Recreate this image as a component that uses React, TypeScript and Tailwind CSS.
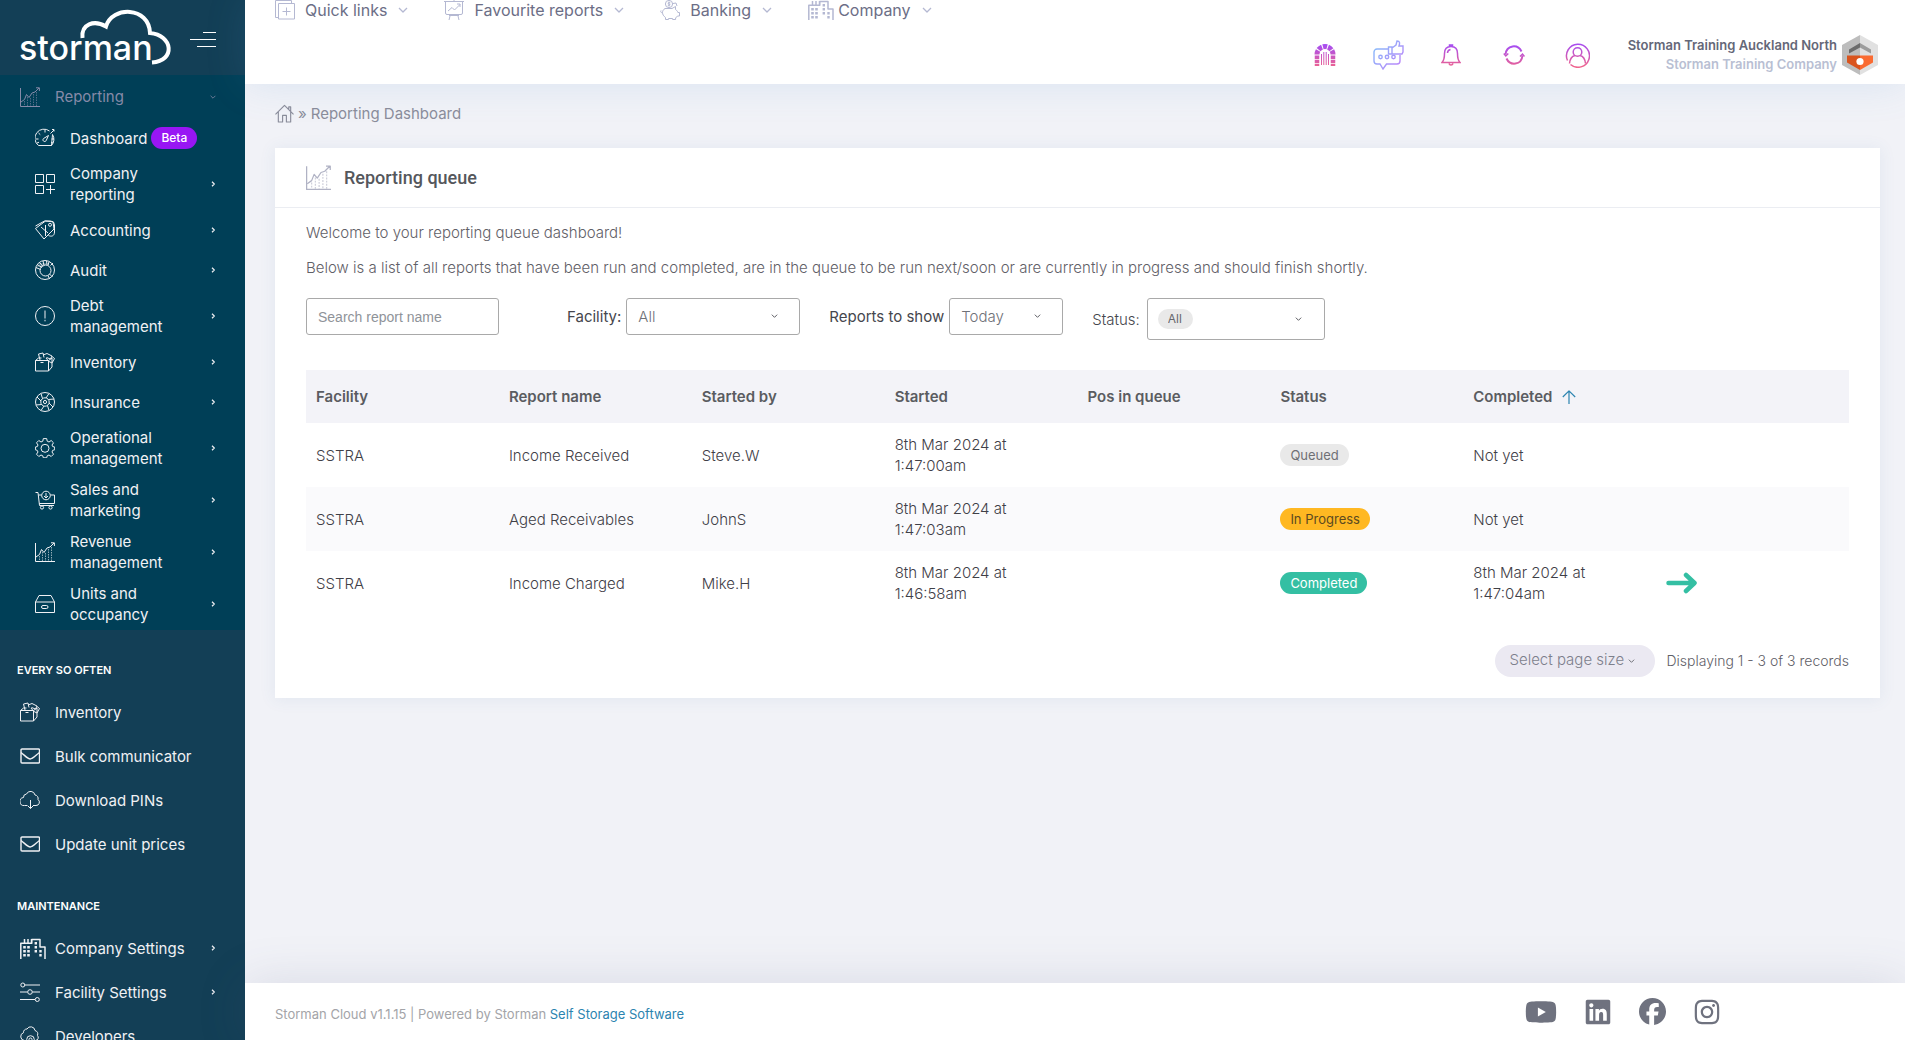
import React from "react";
import { FaFacebook, FaInstagram, FaLinkedin, FaYoutube } from "react-icons/fa6";

// icons

interface IconProps {
  className?: string;
}

interface LineIconProps extends IconProps {
  children: React.ReactNode;
  box?: string;
}

const LineIcon = ({ className, children, box = "0 0 20 20" }: LineIconProps) => (
  <svg
    viewBox={box}
    className={className}
    fill="none"
    stroke="currentColor"
    strokeWidth="1"
    strokeLinejoin="round"
    aria-hidden="true"
  >
    {children}
  </svg>
);

const ChartIcon = ({ className }: IconProps) => (
  <LineIcon className={className}>
    <path d="M.5 1v18.5H20" />
    <path d="M1 15l3.500-2.500 2-5 2.500 3 3-4.500 3-1 4-4M16 .8h3.400V4" />
    <path d="M4.500 14v5M7.500 10v9M10.500 11v8M13.500 7v12M16.500 5v14" strokeDasharray="1.500 1" strokeOpacity="0.6" />
  </LineIcon>
);

const GaugeIcon = ({ className }: IconProps) => (
  <LineIcon className={className}>
    <path d="M3.500 17.500A9 9 0 0 1 14.500 3M17.500 6.500a9 9 0 0 1-1 11zM3.500 17.500h13" />
    <path d="M1 11h2.500M3.500 5l1.800 1.700M10 2v2.500M19 11h-2.500M2 15l2-.8M18 15l-2-.8M15.500 5.500l3.500-3.500M17 1.500l2 0 0 2" />
    <path d="M13.500 7.500l-2.300 5a1.700 1.700 0 1 1-2.300-2.200z" />
  </LineIcon>
);

const GridIcon = ({ className }: IconProps) => (
  <LineIcon className={className}>
    <path d="M.5.5h8v8h-8zM11.500.5h8v8h-8zM.5 11.500h8v8h-8zM15.500 11v9M11 15.500h9" />
  </LineIcon>
);

const TagIcon = ({ className }: IconProps) => (
  <LineIcon className={className}>
    <path d="M.5 8.500l10-7.500 7.500.8 1 7.200-10 10z" />
    <path d="M.5 6l9-5h6a4 4 0 0 1 4 4v7c0 4-3 5-6 3.500M6 7l7 6M10.500 5v11" />
    <circle cx="15" cy="4.800" r="1.500" />
  </LineIcon>
);

const DonutIcon = ({ className }: IconProps) => (
  <LineIcon className={className}>
    <circle cx="10" cy="10" r="9.500" />
    <circle cx="10.500" cy="10.500" r="5.500" />
    <path d="M1 7.500l4.500 2M8 1l1 4.500M14.500 14l3 3M13 15.500l1.500 3.500M15.500 5.500l2.500-2.500M3 5l4 2.500M5 3l3 3.500M11.500 .8l.5 4M14 1.500l-1 4" />
    <path d="M2.500 6h6M4.500 4h9" strokeDasharray="1 1" />
  </LineIcon>
);

const AlertIcon = ({ className }: IconProps) => (
  <LineIcon className={className}>
    <circle cx="10" cy="10" r="9.500" />
    <path d="M10 4.500v8M10 13.800v1.500" />
  </LineIcon>
);

const BoxIcon = ({ className }: IconProps) => (
  <LineIcon className={className}>
    <path d="M.5 8.500h13v10.500H.5zM.5 8.500l3-2.500h3M13.500 8.500l3.500-2.500v9l-3.500 4" />
    <path d="M5 8l-1.500-6 4.500-1 1 4.500M8 3l4-1.500 5 2.500-1.500 3-4-1.500M11 6l2 2.500M17 4.500l2.500 2-2.500 4.500-3-1.500M5.500 10.500h3" />
  </LineIcon>
);

const WheelIcon = ({ className }: IconProps) => (
  <LineIcon className={className}>
    <circle cx="10" cy="10" r="9.500" />
    <circle cx="10" cy="10" r="4.200" />
    <circle cx="10" cy="10" r="1.600" />
    <path d="M6 9L2 5M7.500 6.500L6 1.500M11 6l3-4.500M13.500 7.500l5.500-.5M14 11l4 4M12.500 13.500L14 18.500M9 14l-3 4.500M6.500 12.500L1 13" />
  </LineIcon>
);

const GearIcon = ({ className }: IconProps) => (
  <LineIcon className={className}>
    <path d="M8.300.6h3.400l.5 2.600 1.800.8 2.200-1.500 2.300 2.300L17 7l.7 1.600 2 .4v2.800l-2 .5L17 14l1.500 2.200-2.300 2.300L14 17l-1.800.8-.5 2H8.300l-.5-2L6 17l-2.200 1.500-2.300-2.300L3 14l-.8-1.700-1.800-.5V9l1.900-.4L3 7 1.500 4.800l2.300-2.300L6 4l1.800-.8z" />
    <circle cx="10" cy="10.300" r="4" />
  </LineIcon>
);

const CartIcon = ({ className }: IconProps) => (
  <LineIcon className={className}>
    <path d="M.5 2.500h2.500l1.500 13h14.500M3.500 5h3M15.500 5h4v8.500H4.300" />
    <circle cx="11" cy="5.500" r="4.300" />
    <path d="M11 3v5M9 6l2 2 2-2" />
    <circle cx="7" cy="17.500" r="1.600" />
    <circle cx="15.500" cy="17.500" r="1.600" />
  </LineIcon>
);

const DrawerIcon = ({ className }: IconProps) => (
  <LineIcon className={className}>
    <path d="M.5 8h19v10.500H.5zM.5 8L4 1.500h12L19.500 8" />
    <rect x="6.500" y="11.500" width="6.500" height="3" rx="1.500" />
  </LineIcon>
);

const MailIcon = ({ className }: IconProps) => (
  <LineIcon className={className}>
    <rect x="1" y="3" width="18.500" height="14" rx="1" strokeWidth="1.400" />
    <path d="M1 6.500c3.500 2.500 6.500 6.500 9.200 6.500S16 9 19.500 6.500" strokeWidth="1.400" />
  </LineIcon>
);

const CloudIcon = ({ className }: IconProps) => (
  <LineIcon className={className}>
    <path d="M7.500 15.500H4.500a4 4 0 0 1-1-8A3.300 3.300 0 0 1 6.500 4a4.500 4.500 0 0 1 8.500 1 3.500 3.500 0 0 1 3 4.500 3.300 3.300 0 0 1-2 6H13" />
    <path d="M10.500 10v8.500M8 16l2.500 2.500L13 16" />
  </LineIcon>
);

const CloudGearIcon = ({ className }: IconProps) => (
  <LineIcon className={className}>
    <path d="M5.500 14.500H4.500a4 4 0 0 1-1-7.800A3.300 3.300 0 0 1 7 3a4.300 4.300 0 0 1 8 1.500 4 4 0 0 1 2.500 5A3 3 0 0 1 15.500 14.500" />
    <circle cx="10.500" cy="13.500" r="3.800" />
    <circle cx="10.500" cy="13.500" r="1.500" />
  </LineIcon>
);

const CityIcon = ({ className }: IconProps) => (
  <LineIcon className={className} box="0 0 26 21">
    <path d="M.8 21V5.200h11V1.500h8.200V9h5v12M4.500 1v4M8 1v4M11.500 1v4" strokeWidth="1.500" />
    <path d="M4.500 8v11M8.500 8v11" strokeWidth="2.600" strokeDasharray="2.600 1.400" />
    <path d="M15.800 4v11M20.500 12v7" strokeWidth="2.400" strokeDasharray="2.600 1.400" />
  </LineIcon>
);

const SlidersIcon = ({ className }: IconProps) => (
  <LineIcon className={className}>
    <path d="M5 3h15M0 10h7.500M12.500 10H20M0 17.500h15" strokeWidth="1.200" />
    <circle cx="2.800" cy="3" r="2" />
    <circle cx="10" cy="10" r="2.300" />
    <circle cx="17.300" cy="17.500" r="2" />
  </LineIcon>
);

const AddPageIcon = ({ className }: IconProps) => (
  <LineIcon className={className}>
    <path d="M3.500 3.500h16v15.500h-16zM3.500 17.500H.5V.5h16v3M11.500 7.500v8M7.500 11.500h8" />
  </LineIcon>
);

const BoardIcon = ({ className }: IconProps) => (
  <LineIcon className={className}>
    <path d="M0 1.500h20M1.500 1.500v11.500a1.500 1.500 0 0 0 1.500 1.500h14a1.500 1.500 0 0 0 1.500-1.500V1.500M10 0v1.500M5 15.500h10M6 16l-1 4M14 16l1 4" />
    <path d="M4 11l4-3.500 2.500 2.500 5.500-5.500M13 4h3v3" />
  </LineIcon>
);

const PiggyIcon = ({ className }: IconProps) => (
  <LineIcon className={className}>
    <circle cx="9" cy="4" r="3.600" />
    <path d="M9 1.500v5M10.300 2.800c-2-1-3.200.8-1.300 1.200s1 2-1.200 1.200" />
    <path d="M5 8.500h7l3.500-2v3c1.500 1 2 1.800 2.400 3h1.600v3.500h-2l-1.900 2v1.500h-3V18.500H8.500V19.500h-3V17.500c-2-1.500-3-3-3-5 0-1.800 1-3 2.500-4zM2.500 12.500c-1.500.5-2.200-.7-1.500-2M13 3.500l3-.5 1 3" />
  </LineIcon>
);

const HomeIcon = ({ className }: IconProps) => (
  <LineIcon className={className}>
    <path d="M.5 11L10 1.500 19.500 11M3.500 8.500V19h4.500v-7h4v7h4.500V8.500M14.500 5.500V3h2v4.500" strokeWidth="1.200" />
  </LineIcon>
);

const Chevron = ({ className }: IconProps) => (
  <LineIcon className={className} box="0 0 10 6">
    <path d="M1 1l4 4 4-4" strokeWidth="1.300" />
  </LineIcon>
);

const SmallRight = () => (
  <LineIcon className="h-2 w-1.5 shrink-0" box="0 0 6 8">
    <path d="M2 1.800L4.300 4 2 6.200" strokeWidth="1.200" />
  </LineIcon>
);

const Logo = () => (
  <svg viewBox="0 0 152 56" className="h-14 w-38 overflow-visible" role="img" aria-label="storman">
    <path
      d="M62.500 28C61 14 74 9.500 86 16.500C92 -4 129 -4 130 23C153 25 156 51 132 52.500"
      fill="none"
      stroke="#fff"
      strokeWidth="4"
    />
    <text x="-1" y="50" fill="#fff" fontFamily="Inter, sans-serif" fontSize="34" fontWeight="500">
      storman
    </text>
  </svg>
);

const GateIcon = () => (
  <svg viewBox="0 0 22 22" className="h-[22px] w-[22px]" fill="none" stroke="url(#warm)" aria-hidden="true">
    <path d="M3 10.500a8 8 0 0 1 16 0" strokeWidth="5" strokeDasharray="4.200 1" />
    <path d="M3 11.500V22M19 11.500V22" strokeWidth="4.500" strokeDasharray="3.500 .8" />
    <path d="M7.500 10v11M9.800 8v13M12.200 8v13M14.500 10v11" strokeWidth="1" />
  </svg>
);

const ChatIcon = () => (
  <svg viewBox="0 0 31 30" className="h-[30px] w-[31px]" fill="none" stroke="url(#cool)" strokeWidth="1.400" aria-hidden="true">
    <path d="M15 9H4a3 3 0 0 0-3 3v9a3 3 0 0 0 3 3h3l3 5 3.500-5H24a3 3 0 0 0 3-3v-6" />
    <circle cx="7.500" cy="17" r="1.700" />
    <circle cx="14" cy="17" r="1.700" />
    <circle cx="20.500" cy="17" r="1.700" />
    <path d="M15.500 7H19v7h-3.500zM19 8l4-3 1-4c3 0 3 2 2 5h4v6l-1 2H19" />
  </svg>
);

const BellIcon = () => (
  <svg viewBox="0 0 20 22" className="h-[22px] w-5" fill="none" stroke="url(#warm)" strokeWidth="1.500" aria-hidden="true">
    <path d="M1 18.500c2.500-2.500 2.500-5 2.500-9C3.500 5 6 2.500 10 2.500s6.500 2.500 6.500 7c0 4 0 6.500 2.500 9zM8.500 2.500V1h3v1.500M8 19.500c.5 2 3.500 2 4 0M6.500 9c0-2 1-3 3-3.500" />
  </svg>
);

const RefreshIcon = () => (
  <svg viewBox="0 0 22 20" className="h-5 w-[22px]" fill="none" stroke="url(#warm)" strokeWidth="2" aria-hidden="true">
    <path d="M2.500 9.500C3.500 -.5 15 -1 18.500 6.500M19.500 10.500C18.500 20.500 7 21 3.500 13.500" />
    <path d="M.8 8.500l2 2.500 2.500-2.500M17 11.500l2.500-2.500 2 2.500" strokeWidth="1.500" />
  </svg>
);

const UserIcon = () => (
  <svg viewBox="0 0 25 25" className="h-[25px] w-[25px]" fill="none" stroke="url(#warm)" strokeWidth="1.500" aria-hidden="true">
    <path d="M2.500 17.500A11.500 11.500 0 1 1 5.500 21.500" />
    <circle cx="12.500" cy="9" r="4.300" />
    <path d="M4.500 20.500C5 15 8 13 10 12.500M20.500 20.500C20 15 17 13 15 12.500" />
  </svg>
);

const HexBadge = () => (
  <svg viewBox="0 0 36 40" className="h-10 w-9" aria-hidden="true">
    <path d="M18 0L0 10v20l18 10z" fill="#bdbdbd" />
    <path d="M18 0l18 10v20L18 40z" fill="#e1e1e1" />
    <path d="M18 8L7 14.500v4l11-6z" fill="#6b6b6b" />
    <path d="M18 8l11 6.500v4l-11-6z" fill="#9c9c9c" />
    <path d="M5 20.500h13V35L5 27.500z" fill="#d9541e" />
    <path d="M18 20.500h13v7L18 35z" fill="#fa6b32" />
    <circle cx="18" cy="26.500" r="3.600" fill="#fff" />
  </svg>
);

// sidebar

interface MenuItem {
  label: string;
  icon: React.ComponentType<IconProps>;
  arrow?: boolean;
  badge?: string;
}

const reportingItems: MenuItem[] = [
  { label: "Dashboard", icon: GaugeIcon, badge: "Beta" },
  { label: "Company reporting", icon: GridIcon, arrow: true },
  { label: "Accounting", icon: TagIcon, arrow: true },
  { label: "Audit", icon: DonutIcon, arrow: true },
  { label: "Debt management", icon: AlertIcon, arrow: true },
  { label: "Inventory", icon: BoxIcon, arrow: true },
  { label: "Insurance", icon: WheelIcon, arrow: true },
  { label: "Operational management", icon: GearIcon, arrow: true },
  { label: "Sales and marketing", icon: CartIcon, arrow: true },
  { label: "Revenue management", icon: ChartIcon, arrow: true },
  { label: "Units and occupancy", icon: DrawerIcon, arrow: true },
];

const oftenItems: MenuItem[] = [
  { label: "Inventory", icon: BoxIcon },
  { label: "Bulk communicator", icon: MailIcon },
  { label: "Download PINs", icon: CloudIcon },
  { label: "Update unit prices", icon: MailIcon },
];

const maintenanceItems: MenuItem[] = [
  { label: "Company Settings", icon: CityIcon, arrow: true },
  { label: "Facility Settings", icon: SlidersIcon, arrow: true },
  { label: "Developers", icon: CloudGearIcon },
];

const SideSection = ({ title, items }: { title: string; items: MenuItem[] }) => (
  <section className="pt-5">
    <h2 className="flex h-10 items-center pl-[17px] text-[11px] font-semibold uppercase text-white">{title}</h2>
    <ul>
      {items.map(({ label, icon: Icon, arrow }) => (
        <li key={label}>
          <a href="#" className="flex h-11 items-center pr-[29px] pl-5 text-[#f0f1f4]">
            <span className="w-[35px] shrink-0">
              <Icon className={Icon === CityIcon ? "h-[21px] w-[26px]" : "h-5 w-5"} />
            </span>
            <span className="flex-1">{label}</span>
            {arrow && <SmallRight />}
          </a>
        </li>
      ))}
    </ul>
  </section>
);

const Sidebar = () => (
  <aside className="h-full w-[245px] shrink-0 overflow-hidden bg-[#133f56]">
    <div className="flex h-[75px] items-start justify-between pt-2.5 pr-[29px] pl-5">
      <Logo />
      <button type="button" aria-label="Toggle menu" className="mt-[22px] flex w-[26px] flex-col items-end gap-1.5">
        <span className="h-px w-[13px] bg-white" />
        <span className="h-px w-[26px] bg-white" />
        <span className="h-px w-[19px] bg-white" />
      </button>
    </div>
    <nav className="bg-[#003f57]">
      <a href="#" className="flex h-[43px] items-center pr-[29px] pl-5 text-[#868aa8]">
        <ChartIcon className="h-5 w-5" />
        <span className="flex-1 pl-[15px]">Reporting</span>
        <Chevron className="h-1 w-1.5" />
      </a>
      <ul>
        {reportingItems.map(({ label, icon: Icon, arrow, badge }) => (
          <li key={label}>
            <a href="#" className="flex min-h-10 items-center py-[5px] pr-[29px] pl-[35px] text-[#f0f1f4]">
              <Icon className="h-5 w-5 shrink-0" />
              <span className={badge ? "pl-[15px]" : "w-[125px] pl-[15px]"}>{label}</span>
              {badge && (
                <span className="ml-1 rounded-full bg-[#9816f4] px-2.5 text-xs leading-[22px] font-medium text-white">
                  {badge}
                </span>
              )}
              {arrow && (
                <span className="ml-auto">
                  <SmallRight />
                </span>
              )}
            </a>
          </li>
        ))}
      </ul>
    </nav>
    <SideSection title="Every so often" items={oftenItems} />
    <SideSection title="Maintenance" items={maintenanceItems} />
  </aside>
);

// top bar

const topLinks: MenuItem[] = [
  { label: "Quick links", icon: AddPageIcon },
  { label: "Favourite reports", icon: BoardIcon },
  { label: "Banking", icon: PiggyIcon },
  { label: "Company", icon: CityIcon },
];

const actions = [
  { label: "Gate", icon: GateIcon },
  { label: "Feedback", icon: ChatIcon },
  { label: "Notifications", icon: BellIcon },
  { label: "Refresh", icon: RefreshIcon },
  { label: "Profile", icon: UserIcon },
];

const TopBar = () => (
  <header className="relative bg-white pb-[9px] shadow-[0_0_40px_rgba(82,150,205,0.15)]">
    <nav className="flex h-5 items-center gap-9 overflow-hidden pl-[30px] text-base leading-5 text-[#6c6e86]">
      {topLinks.map(({ label, icon: Icon }) => (
        <a key={label} href="#" className="flex items-center">
          <Icon
            className={Icon === CityIcon ? "mr-1 h-[21px] w-[26px] text-[#b4b8d2]" : "mr-2.5 h-5 w-5 text-[#b4b8d2]"}
          />
          {label}
          <Chevron className="ml-[11px] h-1.5 w-2.5 text-[#b4b8d2]" />
        </a>
      ))}
    </nav>
    <div className="flex items-center justify-end pt-[15px] pr-[27px]">
      <svg width="0" height="0" className="absolute" aria-hidden="true">
        <linearGradient id="warm" gradientUnits="userSpaceOnUse" x1="0" y1="0" x2="0" y2="24">
          <stop offset="0" stopColor="#a44cf5" />
          <stop offset="1" stopColor="#f0648c" />
        </linearGradient>
        <linearGradient id="cool" gradientUnits="userSpaceOnUse" x1="0" y1="0" x2="31" y2="30">
          <stop offset="0" stopColor="#7cc4fa" />
          <stop offset="1" stopColor="#c67cfa" />
        </linearGradient>
      </svg>
      {actions.map(({ label, icon: Icon }) => (
        <button key={label} type="button" aria-label={label} className="flex w-[63px] justify-center">
          <Icon />
        </button>
      ))}
      <div className="pr-[5px] pl-[19px] text-right text-[13px] leading-[19px] font-semibold">
        <p className="text-[#646778]">Storman Training Auckland North</p>
        <p className="text-[#b9bfd3]">Storman Training Company</p>
      </div>
      <HexBadge />
    </div>
  </header>
);

// reporting queue

interface ReportRow {
  facility: string;
  name: string;
  startedBy: string;
  started: string;
  status: "Queued" | "In Progress" | "Completed";
  completed: string;
}

const rows: ReportRow[] = [
  {
    facility: "SSTRA",
    name: "Income Received",
    startedBy: "Steve.W",
    started: "8th Mar 2024 at 1:47:00am",
    status: "Queued",
    completed: "Not yet",
  },
  {
    facility: "SSTRA",
    name: "Aged Receivables",
    startedBy: "JohnS",
    started: "8th Mar 2024 at 1:47:03am",
    status: "In Progress",
    completed: "Not yet",
  },
  {
    facility: "SSTRA",
    name: "Income Charged",
    startedBy: "Mike.H",
    started: "8th Mar 2024 at 1:46:58am",
    status: "Completed",
    completed: "8th Mar 2024 at 1:47:04am",
  },
];

const statusStyle = {
  Queued: "bg-[#e9e9e9] text-[#6f7075]",
  "In Progress": "bg-[#ffb822] text-[#5c4a20]",
  Completed: "bg-[#34bfa3] text-white",
};

const Filters = () => (
  <form className="mt-5 flex items-start text-[#45464d]">
    <input
      type="text"
      aria-label="Search report name"
      placeholder="Search report name"
      className="h-[37px] w-[193px] rounded-[3px] border border-[#a9a9a9] px-[11px] font-[Liberation_Sans] text-sm placeholder:text-[#8f9399]"
    />
    <div className="ml-[68px] flex items-center">
      <label htmlFor="facility" className="pr-[5px]">
        Facility:
      </label>
      <div className="relative">
        <select
          id="facility"
          className="h-[37px] w-[174px] appearance-none rounded-[3px] border border-[#a9a9a9] px-[11px] font-light text-[#6f7178]"
        >
          <option>All</option>
        </select>
        <Chevron className="pointer-events-none absolute top-4 right-[22px] h-1 w-[7px]" />
      </div>
    </div>
    <div className="ml-[29px] flex items-center">
      <label htmlFor="show" className="pr-[5px]">
        Reports to show
      </label>
      <div className="relative">
        <select
          id="show"
          className="h-[37px] w-[114px] appearance-none rounded-[3px] border border-[#a9a9a9] px-[11px] font-light text-[#6f7178]"
        >
          <option>Today</option>
        </select>
        <Chevron className="pointer-events-none absolute top-4 right-[22px] h-1 w-[7px]" />
      </div>
    </div>
    <div className="ml-[29px] flex items-center">
      <label htmlFor="status" className="pr-[7px] font-light">
        Status:
      </label>
      <div className="flex h-[42px] w-[178px] items-center justify-between rounded-[3px] border border-[#a9a9a9] pr-[22px] pl-2.5">
        <select
          id="status"
          className="h-5 appearance-none rounded-full bg-[#e9e9e9] px-2.5 text-xs text-[#66676c]"
        >
          <option>All</option>
        </select>
        <Chevron className="h-1 w-[7px]" />
      </div>
    </div>
  </form>
);

const ReportTable = () => (
  <table className="mt-[30px] w-full table-fixed text-left">
    <thead className="bg-[#f3f3f8] text-[#5a5c61]">
      <tr className="h-[53px]">
        <th className="px-2.5 font-semibold">Facility</th>
        <th className="px-2.5 font-semibold">Report name</th>
        <th className="px-2.5 font-semibold">Started by</th>
        <th className="px-2.5 font-semibold">Started</th>
        <th className="px-2.5 font-semibold">Pos in queue</th>
        <th className="px-2.5 font-semibold">Status</th>
        <th className="px-2.5 font-semibold">
          <span className="flex items-center gap-2.5">
            Completed
            <LineIcon className="h-3.5 w-3.5 text-[#2c84b0]" box="0 0 14 14">
              <path d="M7 14V1M.8 7L7 .8 13.200 7" strokeWidth="1.200" />
            </LineIcon>
          </span>
        </th>
        <td />
      </tr>
    </thead>
    <tbody className="font-light text-[#3f4047]">
      {rows.map((row) => (
        <tr key={row.name} className="h-16 even:bg-[#fafafc]">
          <td className="px-2.5">{row.facility}</td>
          <td className="px-2.5">{row.name}</td>
          <td className="px-2.5">{row.startedBy}</td>
          <td className="pr-[60px] pl-2.5">{row.started}</td>
          <td className="px-2.5" />
          <td className="px-2.5">
            <span
              className={`inline-block rounded-full px-2.5 text-[13px] leading-[22px] font-normal ${statusStyle[row.status]}`}
            >
              {row.status}
            </span>
          </td>
          <td className="pr-[60px] pl-2.5">{row.completed}</td>
          <td className="px-2.5">
            {row.status === "Completed" && (
              <a href="#" aria-label="Open report" className="inline-block align-middle text-[#34bfa3]">
                <svg viewBox="0 0 32 22" className="h-[22px] w-8" fill="none" stroke="currentColor" strokeLinejoin="round" strokeLinecap="round" aria-hidden="true">
                  <path d="M2.500 11H28M20 3l8.500 8-8.500 8" strokeWidth="4.500" />
                </svg>
              </a>
            )}
          </td>
        </tr>
      ))}
    </tbody>
  </table>
);

const App = () => {
  return (
    <div className="flex h-screen overflow-hidden bg-[#f1f2f7] font-[Inter,sans-serif] text-[15px] leading-[21px]">
      <Sidebar />
      <div className="flex min-w-0 flex-1 flex-col">
        <TopBar />
        <main className="flex-1 pt-[18px] pr-[25px] pl-[30px]">
          <div className="flex h-[22px] items-center text-[#8b8d9b]">
            <a href="#" aria-label="Home">
              <HomeIcon className="h-[19px] w-[19px]" />
            </a>
            <span className="px-1">»</span>
            <a href="#">Reporting Dashboard</a>
          </div>
          <section className="mt-6 bg-white pb-[21px] shadow-[0_1px_15px_1px_rgba(69,110,170,0.08)]">
            <div className="flex h-[60px] items-center gap-[13px] border-b border-[#ebedf2] px-[31px]">
              <ChartIcon className="h-[25px] w-[25px] text-[#b0b2c4]" />
              <h1 className="font-[Roboto] text-[18px] font-medium text-[#55575c]">Reporting queue</h1>
            </div>
            <div className="px-[31px] pt-3.5 text-[#5f6067]">
              <p className="font-light">Welcome to your reporting queue dashboard!</p>
              <p className="mt-3.5 font-light">
                Below is a list of all reports that have been run and completed, are in the queue to be run next/soon or
                are currently in progress and should finish shortly.
              </p>
              <Filters />
              <ReportTable />
              <div className="mt-[30px] flex items-center justify-end gap-[11px] font-light">
                <div className="relative">
                  <select
                    aria-label="Select page size"
                    className="h-8 w-40 appearance-none rounded-full bg-[#ebe9f2] pb-1 pl-3.5 text-[#7d7f8c]"
                  >
                    <option>Select page size</option>
                  </select>
                  <Chevron className="pointer-events-none absolute top-3.5 right-5 h-1 w-[7px]" />
                </div>
                <span className="text-sm">Displaying 1 - 3 of 3 records</span>
              </div>
            </div>
          </section>
        </main>
        <footer className="flex h-[57px] items-center justify-between bg-white pr-[184px] pl-[30px] text-[13px] text-[#a3a4a8] shadow-[0_0_50px_rgba(82,90,125,0.15)]">
          <p className="pt-1.5">
            Storman Cloud v1.1.15 | Powered by Storman{" "}
            <a href="#" className="text-[#2c84b0]">
              Self Storage Software
            </a>
          </p>
          <div className="flex items-center gap-[27px] text-[#6f727f]">
            <a href="#" aria-label="YouTube">
              <FaYoutube size={32} />
            </a>
            <a href="#" aria-label="LinkedIn">
              <FaLinkedin size={28} />
            </a>
            <a href="#" aria-label="Facebook">
              <FaFacebook size={27} />
            </a>
            <a href="#" aria-label="Instagram">
              <FaInstagram size={28} />
            </a>
          </div>
        </footer>
      </div>
    </div>
  );
};

export default App;
